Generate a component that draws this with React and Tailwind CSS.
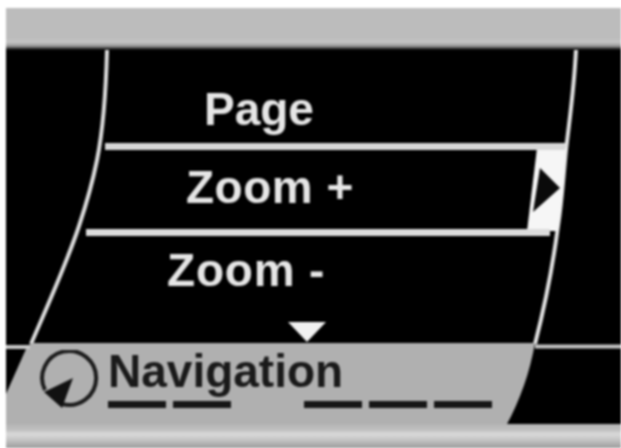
const FONT = "font-['Liberation_Sans',Arial,sans-serif]";

function DisplayShapes() {
  return (
    <svg className="absolute inset-0 h-full w-full" viewBox="6 50 615 398" fill="none">
      {/* left and right bezel curves */}
      <path d="M107 50 C106 90 103 130 97 160 C92 185 86 205 79 226 C66 265 50 300 31 344" stroke="#dcdcdc" strokeWidth="4" />
      <path d="M576 50 C574 90 570 115 566 150 C563 180 562 200 558 226 C553 265 545 305 535 344" stroke="#e2e2e2" strokeWidth="4" />
      {/* highlighted arrow wedge */}
      <path d="M537 148 L566 148 C564 180 562 205 558 231 L527 231 Z" fill="#f6f6f6" />
      <path d="M540 168 L560 188 L533 212 Z" fill="#0a0a0a" />
      {/* status panel */}
      <path d="M31 343 L535 343 C530 372 520 400 506 426 L6 426 L6 394 L26 349 Z" fill="#b0b0b0" />
      <path d="M6 347 H30" stroke="#c8c8c8" strokeWidth="4" />
      <path d="M535 346.500 H621" stroke="#c4c4c4" strokeWidth="4" />
      <path d="M288 322 H326 L307 342 Z" fill="#f2f2f2" />
    </svg>
  );
}

function ClockIcon() {
  return (
    <svg className="h-[62px] w-[62px] shrink-0" viewBox="0 0 62 62" fill="none">
      <path d="M6 40 A27 27 0 1 1 23 54" stroke="#1c1c1c" strokeWidth="4" />
      <path d="M5 42 L34 28 L23 58 Z" fill="#111" />
    </svg>
  );
}

const Dash = () => <div className="h-[7px] w-[58px] bg-[#161616]" />;

export default function App() {
  return (
    <div className={`${FONT} flex h-[448px] w-[621px] flex-col overflow-hidden bg-white pt-2 pl-1.5 blur-[1px]`}>
      <div className="h-[42px] shrink-0 bg-[linear-gradient(#bcbcbc_0,#bcbcbc_30px,#c6c6c6_34px,#9a9a9a_38px,#000_42px)]" />
      <div className="relative flex flex-1 flex-col bg-black">
        <DisplayShapes />
        <div className="relative flex h-[292px] flex-col text-[46px] leading-none font-bold text-[#e6e6e6]">
          <div className="flex h-[93px] items-center pt-[24px] pl-[198px]">Page</div>
          <div className="ml-[99px] h-[7px] w-[460px] bg-[#d8d8d8]" />
          <div className="flex h-[79px] items-center pb-[5px] pl-[180px] tracking-[0.5px]">Zoom +</div>
          <div className="ml-[80px] h-[7px] w-[464px] bg-[#dcdcdc]" />
          <div className="flex h-[50px] items-center pt-[18px] pl-[161px] tracking-[0.8px]">Zoom -</div>
        </div>
        <div className="relative flex h-[82px] items-start pt-[8px] pl-[33px]">
          <ClockIcon />
          <div className="ml-[7px] flex flex-col">
            <div className="text-[46px] leading-[42px] font-bold text-[#1a1a1a]">Navigation</div>
            <div className="mt-[9px] flex gap-[7px]">
              <Dash />
              <Dash />
              <div className="w-[59px]" />
              <Dash />
              <Dash />
              <Dash />
            </div>
          </div>
        </div>
        <div className="relative flex-1 bg-[linear-gradient(#b4b4b4_0,#c0c0c0_6px,#dadada_10px,#c4c4c4_16px,#9c9c9c_100%)]" />
      </div>
    </div>
  );
}
